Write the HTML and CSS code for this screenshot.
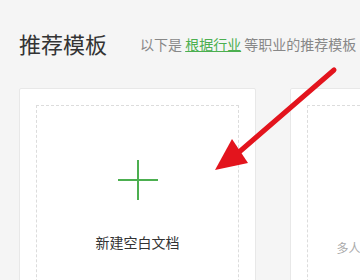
FILE: index.html
```html
<!DOCTYPE html>
<html>
<head>
  <title>推荐模板</title>
  <link rel="stylesheet" href="styles.css">
</head>
<body>

<div class="page">
  <!-- header -->
  <div class="head">
    <h2 class="title">推荐模板</h2>
    <p class="sub">以下是 <a href="#" class="tag">根据行业</a> 等职业的推荐模板</p>
  </div>

  <!-- templates -->
  <div class="cards">
    <div class="card">
      <div class="inner">
        <div class="plus"></div>
        <div class="label">新建空白文档</div>
      </div>
    </div>
    <div class="card">
      <div class="inner">
        <div class="desc">多人实时协作编辑在线文档</div>
      </div>
    </div>
  </div>
</div>

<svg class="arrow" width="360" height="280" viewBox="0 0 360 280">
  <line x1="334" y1="70" x2="238" y2="153" stroke="#e3141d" stroke-width="5" stroke-linecap="round"/>
  <polygon points="215,170 232,139 248,163" fill="#e3141d"/>
</svg>

</body>
</html>
```

FILE: styles.css
```css
body {
  margin: 0;
  background: #f5f5f5;
  font-family: "Noto Sans CJK SC", "Noto Sans", sans-serif;
  overflow: hidden;
}

.page {
  padding: 32px 0 0 19px;
}

.head {
  display: flex;
  align-items: center;
  height: 22px;
}

.title {
  margin: 0 33px 0 0;
  font-size: 22px;
  line-height: 22px;
  font-weight: normal;
  color: #333;
  white-space: nowrap;
}

.sub {
  margin: 0;
  font-size: 14px;
  color: #888;
  white-space: nowrap;
  padding-top: 2px;
}

.tag {
  color: #4caf50;
  text-decoration: underline;
}

.cards {
  display: flex;
  gap: 34px;
  margin-top: 34px;
}

.card {
  flex: none;
  width: 203px;
  padding: 16px;
  background: #fff;
  border: 1px solid #e8e8e8;
  border-radius: 2px;
}

.inner {
  height: 220px;
  border: 1px dashed #dcdcdc;
  display: flex;
  flex-direction: column;
  align-items: center;
}

.plus {
  position: relative;
  width: 40px;
  height: 40px;
  margin-top: 54px;
}

.plus::before,
.plus::after {
  content: "";
  position: absolute;
  background: #4caf50;
}

.plus::before {
  left: 0;
  right: 0;
  top: 19px;
  height: 2px;
}

.plus::after {
  top: 0;
  bottom: 0;
  left: 19px;
  width: 2px;
}

.label {
  margin-top: 32px;
  font-size: 14px;
  line-height: 20px;
  color: #333;
}

.desc {
  margin-top: 133px;
  font-size: 12px;
  line-height: 18px;
  color: #aaa;
  white-space: nowrap;
}

.arrow {
  position: absolute;
  left: 0;
  top: 0;
}
```
